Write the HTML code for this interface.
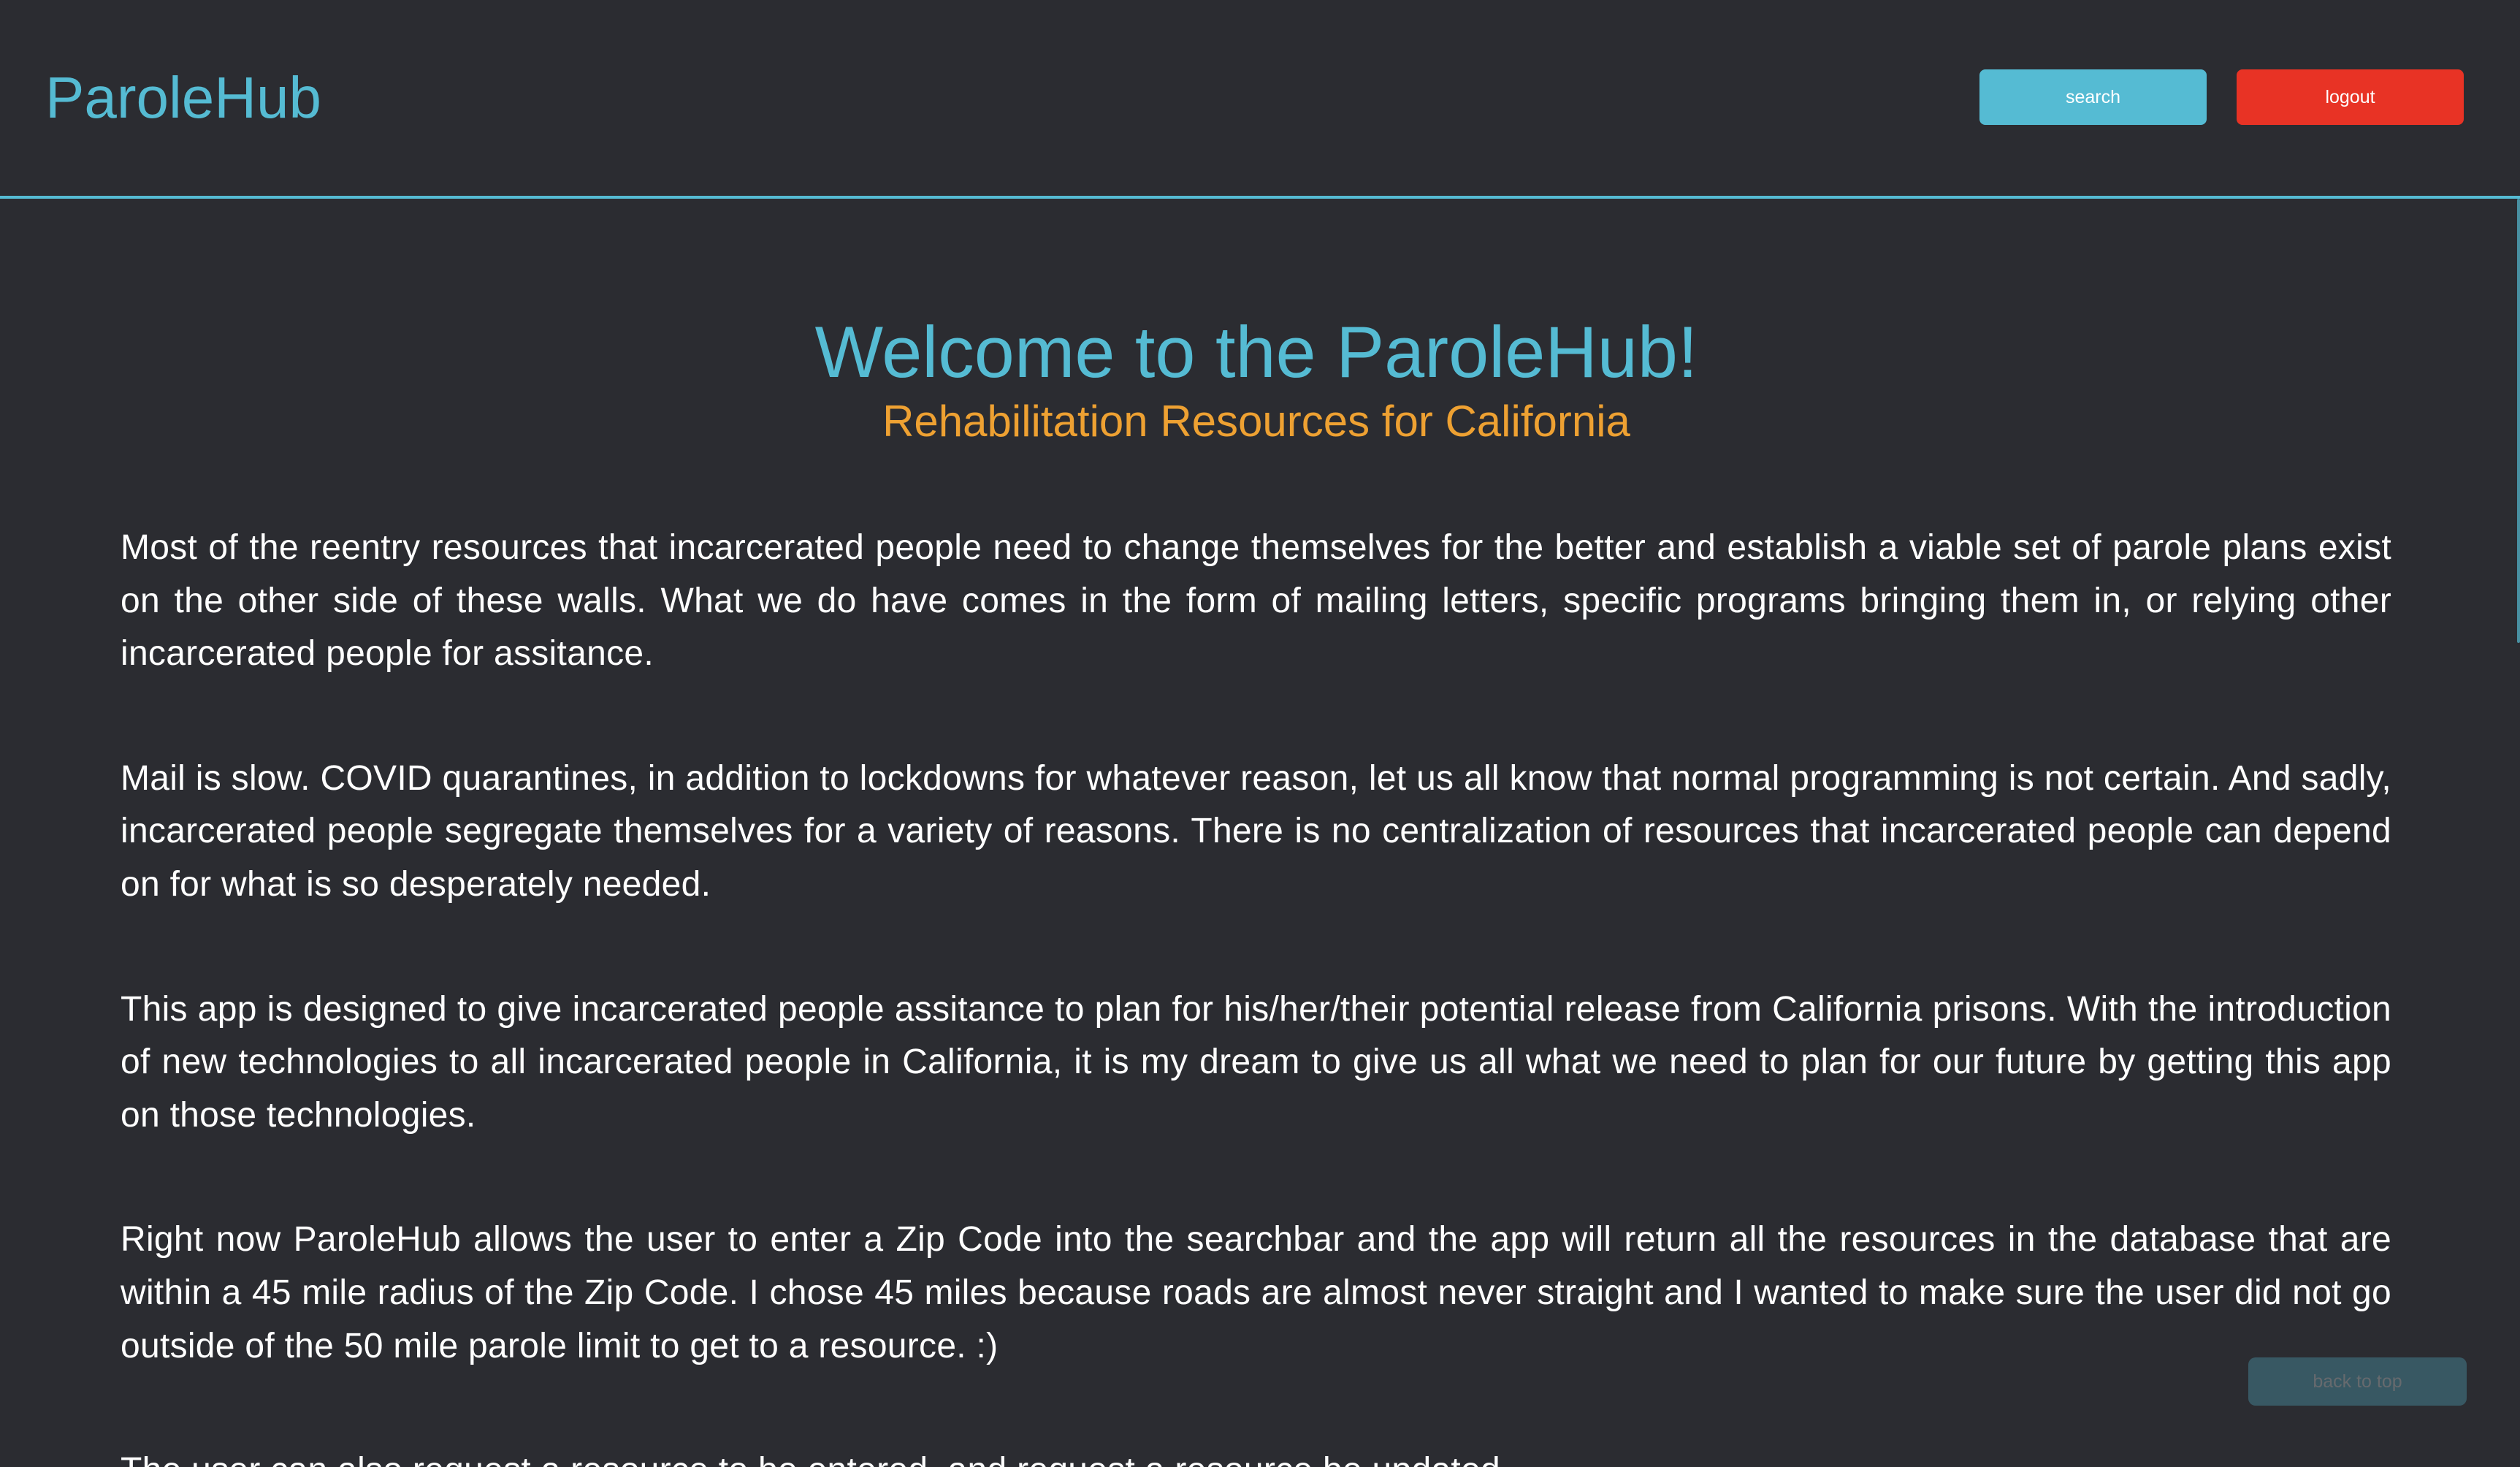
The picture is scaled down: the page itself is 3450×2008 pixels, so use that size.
<!DOCTYPE html>
<html><head><meta charset="utf-8"><style>
html,body{margin:0;padding:0;overflow:hidden;width:3450px;height:2008px;}
body{background:#2b2c31;font-family:"Liberation Sans",Arial,sans-serif;position:relative;}
.logo{position:absolute;left:62px;top:94px;font-size:80px;color:#55bbd3;line-height:1;}
.btn{position:absolute;top:95px;height:76px;width:311px;border-radius:8px;color:#fff;font-size:25px;display:flex;align-items:center;justify-content:center;}
.hr{position:absolute;left:0;top:268px;width:3450px;height:4px;background:#55bbd3;}
.sb{position:absolute;right:0;top:272px;width:4px;height:608px;background:#55bbd3;opacity:.7;border-radius:2px;}
h1{position:absolute;left:0;width:3440px;top:428px;margin:0;text-align:center;font-weight:normal;font-size:99px;line-height:1.1;color:#55bbd3;}
h2{position:absolute;left:0;width:3440px;top:544px;margin:0;text-align:center;font-weight:normal;font-size:60px;line-height:1.1;color:#eea132;}
.c{position:absolute;left:165px;width:3109px;top:714px;height:1294px;overflow:hidden;color:#fff;font-size:48px;letter-spacing:0.28px;line-height:72.6px;text-align:justify;}
.c p{margin:0 0 98px 0;}
.top{position:absolute;left:3078px;top:1858px;width:299px;height:66px;border-radius:10px;background:#385863;color:#666a6e;font-size:25px;display:flex;align-items:center;justify-content:center;}
</style></head><body>
<div class="logo">ParoleHub</div>
<div class="btn" style="left:2710px;background:#55bbd3">search</div>
<div class="btn" style="left:3062px;background:#e83325">logout</div>
<div class="hr"></div>
<div class="sb"></div>
<h1>Welcome to the ParoleHub!</h1>
<h2>Rehabilitation Resources for California</h2>
<div class="c">
<p>Most of the reentry resources that incarcerated people need to change themselves for the better and establish a viable set of parole plans exist on the other side of these walls. What we do have comes in the form of mailing letters, specific programs bringing them in, or relying other incarcerated people for assitance.</p>
<p>Mail is slow. COVID quarantines, in addition to lockdowns for whatever reason, let us all know that normal programming is not certain. And sadly, incarcerated people segregate themselves for a variety of reasons. There is no centralization of resources that incarcerated people can depend on for what is so desperately needed.</p>
<p>This app is designed to give incarcerated people assitance to plan for his/her/their potential release from California prisons. With the introduction of new technologies to all incarcerated people in California, it is my dream to give us all what we need to plan for our future by getting this app on those technologies.</p>
<p>Right now ParoleHub allows the user to enter a Zip Code into the searchbar and the app will return all the resources in the database that are within a 45 mile radius of the Zip Code. I chose 45 miles because roads are almost never straight and I wanted to make sure the user did not go outside of the 50 mile parole limit to get to a resource. :)</p>
<p>The user can also request a resource to be entered, and request a resource be updated.</p>
</div>
<div class="top">back to top</div>
</body></html>
